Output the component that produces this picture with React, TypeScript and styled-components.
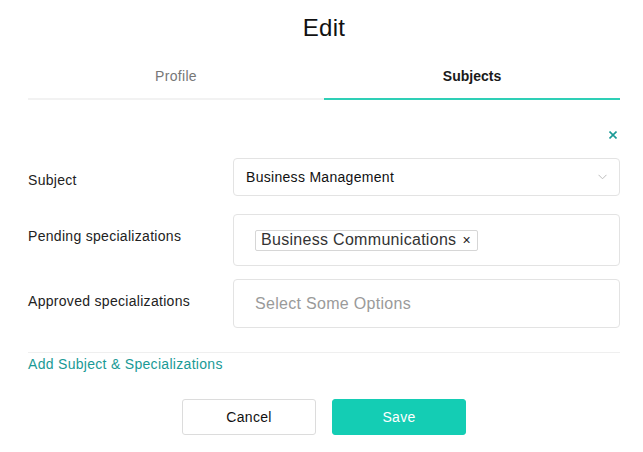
import React from "react";
import styled, { createGlobalStyle } from "styled-components";

const Global = createGlobalStyle`
  html, body { margin: 0; padding: 0; background: #fff; }
  body {
    font-family: "Liberation Sans", Arial, Helvetica, sans-serif;
    color: #222;
    letter-spacing: 0.3px;
  }
  * { box-sizing: border-box; }
`;

const Page = styled.div`
  width: 643px;
  padding: 12px 23px 0 28px;
`;

const Title = styled.h1`
  margin: 0;
  font-size: 24px;
  line-height: 32px;
  font-weight: 400;
  text-align: center;
  color: #111;
`;

const Tabs = styled.div`
  display: grid;
  grid-template-columns: 1fr 1fr;
  margin-top: 22px;
`;

const Tab = styled.div<{ $active?: boolean }>`
  text-align: center;
  font-size: 14px;
  line-height: 20px;
  padding-bottom: 12px;
  border-bottom: 2px solid ${(p) => (p.$active ? "#2ecfb6" : "#f2f2f2")};
  color: ${(p) => (p.$active ? "#1a1a1a" : "#777")};
  font-weight: ${(p) => (p.$active ? 700 : 400)};
  letter-spacing: ${(p) => (p.$active ? "0" : "0.3px")};
`;

const CloseRow = styled.div`
  display: flex;
  justify-content: flex-end;
  padding: 31px 3px 19px 0;
  line-height: 0;
`;

const Row = styled.div<{ $mb: number }>`
  display: grid;
  grid-template-columns: 205px 1fr;
  align-items: start;
  margin-bottom: ${(p) => p.$mb}px;
`;

const Label = styled.div`
  font-size: 14px;
  line-height: 20px;
  padding-top: 12px;
  color: #222;
`;

const SelectBox = styled.div`
  height: 38px;
  border: 1px solid #e3e3e3;
  border-radius: 4px;
  display: flex;
  align-items: center;
  justify-content: space-between;
  padding: 0 12px;
  font-size: 14px;
  color: #111;
`;

const MultiBox = styled.div<{ $h: number }>`
  min-height: ${(p) => p.$h}px;
  border: 1px solid #e3e3e3;
  border-radius: 4px;
  display: flex;
  align-items: center;
  padding: 0 21px;
`;

const TagChip = styled.span`
  display: inline-flex;
  align-items: center;
  height: 21px;
  border: 1px solid #d6d6d6;
  border-radius: 2px;
  padding: 0 6px 0 5px;
  font-size: 16px;
  color: #333;
  gap: 6px;
  background: #fff;
`;

const TagX = styled.span`
  font-size: 14px;
  color: #222;
`;

const Placeholder = styled.span`
  font-size: 16px;
  color: #9a9a9a;
`;

const Divider = styled.hr`
  border: none;
  border-top: 1px solid #efefef;
  margin: 0;
`;

const AddLink = styled.a`
  display: block;
  font-size: 14px;
  line-height: 20px;
  color: #1a9a96;
  text-decoration: none;
  margin-top: 1px;
`;

const Actions = styled.div`
  display: flex;
  justify-content: center;
  gap: 16px;
  margin-top: 25px;
`;

const Button = styled.button<{ $primary?: boolean }>`
  width: 134px;
  height: 36px;
  border-radius: 3px;
  font-family: inherit;
  letter-spacing: inherit;
  font-size: 14px;
  border: 1px solid ${(p) => (p.$primary ? "#14cdb4" : "#dcdcdc")};
  background: ${(p) => (p.$primary ? "#14cdb4" : "#fff")};
  color: ${(p) => (p.$primary ? "#fff" : "#111")};
  cursor: pointer;
`;

const Chevron = () => (
  <svg width="9" height="6" viewBox="0 0 9 6" fill="none">
    <path d="M0.5 0.8 L4.5 4.8 L8.5 0.8" stroke="#bdbdbd" strokeWidth="1" />
  </svg>
);

const CloseIcon = () => (
  <svg width="8" height="8" viewBox="0 0 8 8" fill="none">
    <path d="M0.5 0.5 L7.5 7.5 M7.5 0.5 L0.5 7.5" stroke="#1a9a96" strokeWidth="1.6" />
  </svg>
);

export default function App() {
  return (
    <Page>
      <Global />
      <Title>Edit</Title>
      <Tabs>
        <Tab>Profile</Tab>
        <Tab $active>Subjects</Tab>
      </Tabs>
      <CloseRow>
        <CloseIcon />
      </CloseRow>
      <Row $mb={18}>
        <Label>Subject</Label>
        <SelectBox>
          <span>Business Management</span>
          <Chevron />
        </SelectBox>
      </Row>
      <Row $mb={13}>
        <Label>Pending specializations</Label>
        <MultiBox $h={52}>
          <TagChip>
            Business Communications<TagX>×</TagX>
          </TagChip>
        </MultiBox>
      </Row>
      <Row $mb={24}>
        <Label>Approved specializations</Label>
        <MultiBox $h={49}>
          <Placeholder>Select Some Options</Placeholder>
        </MultiBox>
      </Row>
      <Divider />
      <AddLink href="#">Add Subject &amp; Specializations</AddLink>
      <Actions>
        <Button>Cancel</Button>
        <Button $primary>Save</Button>
      </Actions>
    </Page>
  );
}
